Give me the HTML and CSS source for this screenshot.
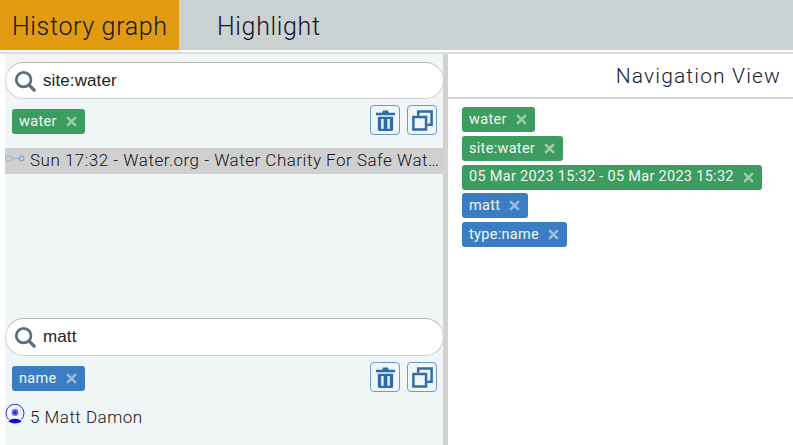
FILE: index.html
```html
<!DOCTYPE html>
<html lang="en">
<head>
<meta charset="utf-8">
<title>History graph</title>
<link rel="stylesheet" href="styles.css">
</head>
<body>
<nav class="tabs">
  <div class="tab tab-active">History graph</div>
  <div class="tab tab-plain">Highlight</div>
</nav>
<main class="layout">
  <section class="left">
    <div class="pane pane-history">
      <div class="search">
        <svg class="search-icon" viewBox="0 0 24 24"><circle cx="10.5" cy="10.5" r="8" fill="none" stroke="#5b6e80" stroke-width="3"/><path d="M16.5 16.5 22 22" stroke="#5b6e80" stroke-width="3.6" stroke-linecap="round"/></svg>
        <span class="search-text">site:water</span>
      </div>
      <div class="filter-row">
        <span class="tag tag-green">water<svg class="x" viewBox="0 0 10 10"><use href="#cross"/></svg></span>
        <div class="actions">
          <button class="action"><svg viewBox="0 0 24 24"><use href="#trash"/></svg></button>
          <button class="action"><svg viewBox="0 0 24 24"><use href="#copy"/></svg></button>
        </div>
      </div>
      <div class="row row-selected">
        <svg class="row-icon" viewBox="0 0 18 8"><path d="M.8 2 Q3 .5 6.5 3 L9 4 L6.5 5 Q3 7.5 .8 6 Q0 4 .8 2Z M9 4H12.5" fill="none" stroke="#8fb4e0" stroke-width=".9"/><circle cx="15" cy="4" r="2.1" fill="none" stroke="#7ea8dc" stroke-width="1.1"/></svg>
        <span class="row-text">Sun 17:32 - Water.org - Water Charity For Safe Water &amp; Sanitation</span>
      </div>
    </div>
    <div class="pane pane-names">
      <div class="search">
        <svg class="search-icon" viewBox="0 0 24 24"><circle cx="10.5" cy="10.5" r="8" fill="none" stroke="#5b6e80" stroke-width="3"/><path d="M16.5 16.5 22 22" stroke="#5b6e80" stroke-width="3.6" stroke-linecap="round"/></svg>
        <span class="search-text">matt</span>
      </div>
      <div class="filter-row">
        <span class="tag tag-blue">name<svg class="x" viewBox="0 0 10 10"><use href="#cross"/></svg></span>
        <div class="actions">
          <button class="action"><svg viewBox="0 0 24 24"><use href="#trash"/></svg></button>
          <button class="action"><svg viewBox="0 0 24 24"><use href="#copy"/></svg></button>
        </div>
      </div>
      <div class="row row-person">
        <svg class="person-icon" viewBox="0 0 20 20"><path d="M3.6 15.6A9 9 0 1 1 16.4 15.6" fill="none" stroke="#2a2ae0" stroke-width="1"/><circle cx="10" cy="8.5" r="3.4" fill="#6a6af0"/><circle cx="10" cy="8.5" r="1.6" fill="#2020c0"/><path d="M3.5 17.6C5 13.8 15 13.8 16.5 17.6 14 20 6 20 3.5 17.6Z" fill="#0a0ae0"/></svg>
        <span class="row-text">5 Matt Damon</span>
      </div>
    </div>
  </section>
  <section class="right">
    <h1 class="title">Navigation View</h1>
    <div class="tags">
      <span class="tag tag-green">water<svg class="x" viewBox="0 0 10 10"><use href="#cross"/></svg></span>
      <span class="tag tag-green">site:water<svg class="x" viewBox="0 0 10 10"><use href="#cross"/></svg></span>
      <span class="tag tag-green">05 Mar 2023 15:32 - 05 Mar 2023 15:32<svg class="x" viewBox="0 0 10 10"><use href="#cross"/></svg></span>
      <span class="tag tag-blue">matt<svg class="x" viewBox="0 0 10 10"><use href="#cross"/></svg></span>
      <span class="tag tag-blue">type:name<svg class="x" viewBox="0 0 10 10"><use href="#cross"/></svg></span>
    </div>
  </section>
</main>
<svg class="defs" aria-hidden="true">
  <symbol id="cross" viewBox="0 0 10 10">
    <path d="M1 1 9 9M9 1 1 9" fill="none" stroke="#fff" stroke-width="2.2"/>
  </symbol>
  <symbol id="trash" viewBox="0 0 24 24">
    <path fill="#2f6ca8" d="M2 4H8.5L9.5 1.5H14.5L15.5 4H22V6.5H2ZM4 8H20V21Q20 23 18 23H6Q4 23 4 21ZM7.5 10.5V20.5H10V10.5ZM13.999 10.5V20.5H16.5V10.5Z" fill-rule="evenodd"/>
  </symbol>
  <symbol id="copy" viewBox="0 0 24 24">
    <path fill="none" stroke="#2f6ca8" stroke-width="2.6" d="M2.5 8.3H15.7V21.5H2.5Z"/>
    <path fill="none" stroke="#2f6ca8" stroke-width="2.6" d="M7.5 7V2.5H21.5V16.5H17"/>
  </symbol>
</svg>
</body>
</html>
```
FILE: styles.css
```css
* { box-sizing: border-box; }
html, body { margin: 0; padding: 0; }
body {
  width: 793px;
  height: 445px;
  overflow: hidden;
  background: #fff;
  font-family: Roboto, "Liberation Sans", sans-serif;
  color: #14141e;
}
.tabs {
  display: flex;
  height: 50px;
  background: #cad2d4;
}
.tab {
  display: flex;
  align-items: center;
  padding-top: 2px;
  font-size: 25px;
  letter-spacing: 0.65px;
  font-weight: 300;
}
.tab-active { width: 179px; padding-left: 12px; background: #e29b10; }
.tab-plain { padding-left: 38px; }
.layout {
  display: grid;
  grid-template-columns: 448px 345px;
  height: 393px;
  margin-top: 2px;
  border-top: 2px solid #dcdcdc;
}
.left {
  display: flex;
  flex-direction: column;
  margin-left: 5px;
  background: #f0f5f6;
  border-right: 5px solid #d2d2d2;
}
.pane { display: flex; flex-direction: column; }
.pane-history { height: 264px; padding-top: 8px; }
.pane-names { flex: 1; }
.search {
  display: flex;
  align-items: center;
  height: 37px;
  margin-right: -1px;
  padding-left: 8px;
  background: #fff;
  border: 1px solid #cfd2d4;
  border-top-color: #b8b8b8;
  border-radius: 19px;
}
.pane-names .search { height: 38px; }
.search-icon { width: 22px; height: 22px; }
.search-text {
  margin-left: 7px;
  font-family: "Liberation Sans", sans-serif;
  font-size: 17px;
  letter-spacing: 0.1px;
  color: #222;
}
.filter-row {
  display: flex;
  justify-content: space-between;
  align-items: flex-start;
  padding: 6px 6px 0 7px;
}
.filter-row .tag { margin-top: 4px; }
.actions { display: flex; gap: 7px; }
.action {
  display: flex;
  align-items: center;
  justify-content: center;
  width: 30px;
  height: 30px;
  padding: 0;
  background: transparent;
  border: 1px solid #6c9bc9;
  border-radius: 4px;
}
.action svg { width: 23px; height: 23px; }
.tag {
  display: inline-flex;
  align-items: center;
  height: 25px;
  padding: 1px 8px 0 7px;
  border-radius: 3px;
  font-size: 14.5px;
  line-height: 1;
  letter-spacing: 0.3px;
  color: #f2f7f4;
  white-space: nowrap;
}
.tag-green { background: #3d9c5f; }
.tag-blue { background: #3a7dc2; }
.x {
  flex: none;
  width: 11px;
  height: 11px;
  margin: -1px 0 0 9px;
  opacity: 0.5;
}
.row {
  display: flex;
  align-items: center;
  font-size: 17px;
  letter-spacing: 0.5px;
}
.row-selected {
  height: 26px;
  margin-top: 13px;
  padding-bottom: 2px;
  background: #d0d0d0;
}
.row-person { margin-top: 12px; height: 26px; }
.row-icon { flex: none; width: 20px; height: 9px; margin-right: 5px; margin-top: -3px; }
.person-icon { flex: none; width: 20px; height: 20px; margin-right: 5px; margin-top: -7px; }
.row-text { overflow: hidden; text-overflow: ellipsis; white-space: nowrap; padding-right: 3px; font-weight: 300; }
.right { display: flex; flex-direction: column; }
.title {
  height: 45px;
  margin: 0;
  padding: 10px 12px 0 0;
  text-align: right;
  border-bottom: 2px solid #d6d6d6;
  font-size: 21px;
  font-weight: 300;
  letter-spacing: 1.15px;
  color: #14202f;
}
.tags {
  display: flex;
  flex-direction: column;
  align-items: flex-start;
  gap: 3.8px;
  padding: 8px 0 0 14px;
}
.defs { position: absolute; width: 0; height: 0; }
```
